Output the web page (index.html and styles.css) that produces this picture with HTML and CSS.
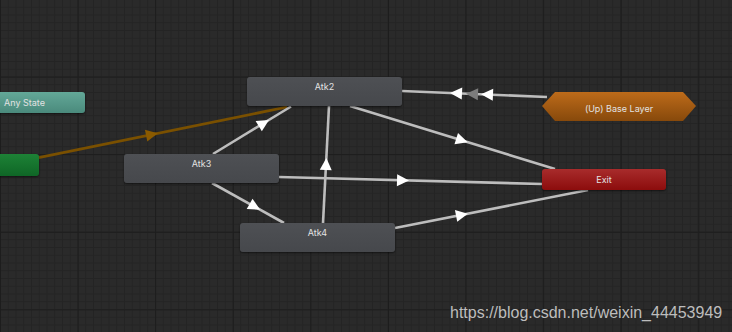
FILE: index.html
```html
<!DOCTYPE html>
<html lang="en">
<head>
  <meta charset="UTF-8">
  <title>Animator – Base Layer</title>
  <link rel="stylesheet" href="styles.css">
</head>
<body>
  <main class="graph">
    <!-- transitions, drawn under the states -->
    <svg class="edges" width="732" height="332" viewBox="0 0 732 332" aria-hidden="true">
      <g class="edge edge-entry">
        <line x1="30" y1="159.3" x2="287" y2="107"/>
        <polygon transform="translate(151 134.7) rotate(-11.5)" points="7,0 -5,-6 -5,6"/>
      </g>
      <g class="edge">
        <line x1="213" y1="154" x2="291" y2="106.5"/>
        <polygon transform="translate(263 123.6) rotate(-31.3)" points="7,0 -5,-6 -5,6"/>
      </g>
      <g class="edge">
        <line x1="323" y1="223" x2="329" y2="106"/>
        <polygon transform="translate(326 165) rotate(-87.1)" points="7,0 -5,-6 -5,6"/>
      </g>
      <g class="edge">
        <line x1="212" y1="183" x2="284" y2="223"/>
        <polygon transform="translate(254 206.3) rotate(29)" points="7,0 -5,-6 -5,6"/>
      </g>
      <g class="edge">
        <line x1="279" y1="177" x2="542" y2="184"/>
        <polygon transform="translate(402 180.3) rotate(1.5)" points="7,0 -5,-6 -5,6"/>
      </g>
      <g class="edge">
        <line x1="395" y1="228" x2="588" y2="190"/>
        <polygon transform="translate(461 215) rotate(-11.1)" points="7,0 -5,-6 -5,6"/>
      </g>
      <g class="edge">
        <line x1="350" y1="106" x2="555" y2="169"/>
        <polygon transform="translate(461 140.1) rotate(17.1)" points="7,0 -5,-6 -5,6"/>
      </g>
      <g class="edge">
        <line x1="547" y1="97" x2="402" y2="91"/>
        <polygon transform="translate(457 93.3) rotate(-177.6)" points="7,0 -5,-6 -5,6"/>
        <polygon class="dim" transform="translate(473 94) rotate(-177.6)" points="7,0 -5,-6 -5,6"/>
        <polygon transform="translate(488 94.6) rotate(-177.6)" points="7,0 -5,-6 -5,6"/>
      </g>
    </svg>

    <!-- states -->
    <div class="node node-any" style="left:-70px;top:92px">Any State</div>
    <div class="node node-entry" style="left:-116px;top:154px"></div>
    <div class="node node-state" style="left:247px;top:77px">Atk2</div>
    <div class="node node-state" style="left:124px;top:154px">Atk3</div>
    <div class="node node-state" style="left:240px;top:223px">Atk4</div>
    <div class="node node-layer" style="left:542px;top:92px">(Up) Base Layer</div>
    <div class="node node-exit" style="left:542px;top:169px">Exit</div>

    <p class="watermark">https://blog.csdn.net/weixin_44453949</p>
  </main>
</body>
</html>
```

FILE: styles.css
```css
*{box-sizing:border-box;margin:0;padding:0}
html,body{width:732px;height:332px;overflow:hidden}
body{
  background-color:#2a2a2a;
  background-image:
    linear-gradient(to right,#1d1d1d 1px,transparent 1px),
    linear-gradient(to bottom,#1d1d1d 1px,transparent 1px),
    linear-gradient(to right,#242424 1px,transparent 1px),
    linear-gradient(to bottom,#242424 1px,transparent 1px);
  background-size:77.6px 77.6px,77.6px 77.6px,7.76px 7.76px,7.76px 7.76px;
  background-position:0 -1px;
  font-family:Inter,"Noto Sans",sans-serif;
}
.graph{position:relative;width:732px;height:332px}

/* transitions */
.edges{position:absolute;left:0;top:0}
.edge line{stroke:#bdbdbd;stroke-width:2.6}
.edge polygon{fill:#fff}
.edge polygon.dim{fill:#7c7c7c}
.edge-entry line{stroke:#7a5000;stroke-width:2.8}
.edge-entry polygon{fill:#8a5a00}

/* states */
.node{
  position:absolute;width:155px;height:29px;
  border-radius:3px;color:#e2e2e2;font-size:9px;line-height:12px;
  text-align:center;padding-top:4px;
  box-shadow:0 1px 2px rgba(0,0,0,.55);
}
.node-state{background:linear-gradient(#4e5054,#46484c)}
.node-any{
  height:21px;padding-top:5px;
  text-align:left;padding-left:74px;
  background:linear-gradient(#63a898,#4a8a7c);
}
.node-entry{height:22px;background:linear-gradient(#1d8236,#0f6626)}
.node-exit{
  width:124px;height:21px;padding-top:5px;
  background:linear-gradient(#a82c2c,#8c0c0c);
}
.node-layer{
  width:154px;height:29px;padding-top:11px;border-radius:0;box-shadow:none;
  background:linear-gradient(#bd6b1a,#87490b);
  clip-path:polygon(13px 0,141px 0,154px 14px,141px 29px,13px 29px,0 14px);
}

.watermark{
  position:absolute;left:450px;top:303px;
  font-family:"Liberation Sans",Arial,sans-serif;font-size:16px;line-height:19px;
  color:#bdbdbd;white-space:nowrap;
}
```
